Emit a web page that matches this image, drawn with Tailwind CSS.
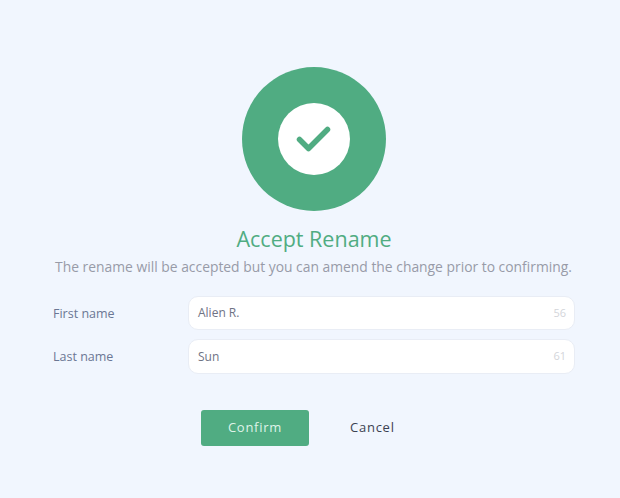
<!DOCTYPE html>
<html lang="en">
<head>
    <meta charset="UTF-8">
    <title>Accept Rename</title>
    <script src="https://cdn.jsdelivr.net/npm/@tailwindcss/browser@4"></script>
</head>
<body class="bg-[#f1f6fe] w-[620px] h-[498px] overflow-hidden font-['Open_Sans',sans-serif]">
    <div class="flex flex-col items-center pt-[67px] pl-2">
        <div class="w-36 h-36 rounded-full bg-[#50ac82] flex items-center justify-center">
            <div class="w-[72px] h-[72px] rounded-full bg-white flex items-center justify-center">
                <svg width="36" height="26" viewBox="0 0 36 26" fill="none" stroke="#50ac82" stroke-width="5.5" stroke-linecap="round" stroke-linejoin="round">
                    <path d="M3.5 13.5 L12.5 22.5 L31.5 3.5"/>
                </svg>
            </div>
        </div>
        <h1 class="mt-[13px] text-[21.5px] leading-[30px] text-[#50ac82]">Accept Rename</h1>
        <p class="mt-[3px] -ml-[1px] text-[13.87px] leading-5 text-[#989ba8]">The rename will be accepted but you can amend the change prior to confirming.</p>
    </div>

    <div class="mt-[19px] ml-[53px] w-[522px] flex flex-col gap-[9px]">
        <div class="flex items-center">
            <label class="w-[135px] pt-[2px] text-[12.5px] text-[#6b7794]">First name</label>
            <div class="flex-1 h-[34px] pl-[9px] pr-[8px] flex items-center justify-between bg-white border border-[#e9edf5] rounded-[10px]">
                <span class="text-xs text-[#6f7385]">Alien R.</span>
                <span class="text-[11px] text-[#d3d5da]">56</span>
            </div>
        </div>
        <div class="flex items-center">
            <label class="w-[135px] pt-[2px] text-[12.5px] text-[#6b7794]">Last name</label>
            <div class="flex-1 h-[35px] pl-[9px] pr-[8px] flex items-center justify-between bg-white border border-[#e9edf5] rounded-[10px]">
                <span class="text-xs text-[#6f7385]">Sun</span>
                <span class="text-[11px] text-[#d3d5da]">61</span>
            </div>
        </div>
    </div>

    <div class="mt-9 ml-[201px] flex items-center">
        <button class="w-[108px] h-9 rounded-[3px] bg-[#50ac82] text-[13px] tracking-[0.75px] text-[#dff3e8]">Confirm</button>
        <button class="ml-[41px] text-[13px] tracking-[0.75px] text-[#3c4252]">Cancel</button>
    </div>
</body>
</html>
